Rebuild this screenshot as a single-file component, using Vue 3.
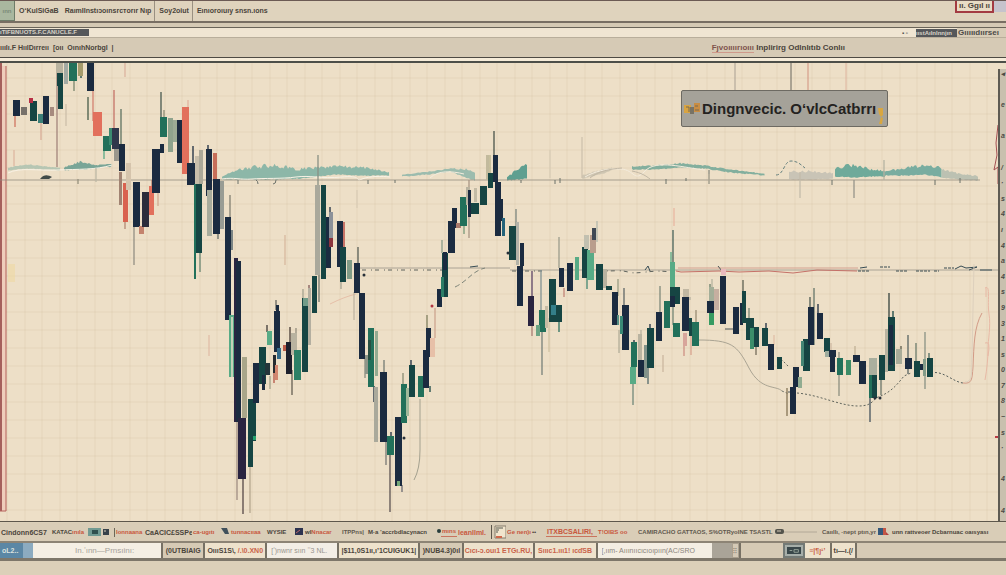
<script setup>
const N = '#1b2b40'
const T = '#164543'
const G = '#22705a'
const S = '#58ab86'
const M = '#b9b3a0'
const R = '#e2705c'
const P = '#2a2440'

// x, width, top, bottom, fill
const candles = [
  [13, 7, 100, 116, N], [21, 6, 107, 115, '#77716a'], [30, 7, 101, 121, T], [29, 4, 98, 103, '#b82f45'], [38, 5, 114, 123, '#3c7f78'],
  [43, 6, 96, 124, N], [50, 4, 107, 116, '#a68a7e'], [56, 7, 63, 73, M], [57, 6, 73, 86, T], [58, 5, 86, 109, T],
  [64, 4, 63, 84, '#a3aaa3'], [69, 8, 62, 81, G], [78, 5, 63, 76, '#a59b6c'], [87, 7, 62, 91, N], [93, 9, 112, 136, R],
  [103, 8, 136, 151, G], [109, 4, 128, 145, '#3c8a70'], [112, 7, 128, 149, '#30364b'], [114, 5, 149, 161, '#9a978d'], [119, 6, 144, 171, N],
  [119, 3, 172, 205, '#a18372'], [123, 5, 183, 222, '#d9624f'], [126, 5, 163, 190, '#d5c4ac'], [133, 7, 182, 227, N], [139, 5, 226, 234, '#c4836d'],
  [142, 7, 192, 227, '#2b2c3b'], [149, 5, 186, 215, R], [152, 8, 149, 193, N], [160, 7, 117, 137, G], [160, 4, 144, 153, N],
  [168, 5, 118, 152, '#8fa38d'], [173, 4, 120, 142, '#9cab95'], [177, 5, 120, 163, N], [182, 7, 107, 174, R], [187, 8, 163, 185, N],
  [195, 4, 156, 184, '#c8beaa'], [199, 4, 150, 184, '#aca898'], [195, 7, 184, 253, T], [194, 2, 184, 279, G], [206, 6, 149, 196, N],
  [213, 4, 153, 180, '#c66e59'], [207, 5, 190, 236, '#a8ac9c'], [213, 7, 179, 234, N], [220, 4, 181, 229, '#999c94'], [225, 6, 217, 320, N],
  [229, 5, 315, 377, S], [231, 2, 317, 377, '#c4d1b6'], [242, 5, 357, 418, '#a9a68a'], [234, 4, 258, 422, P], [236, 5, 261, 422, N],
  [238, 8, 418, 479, P], [248, 8, 399, 441, T], [248, 5, 440, 467, T], [253, 3, 436, 440, '#25a26e'], [253, 6, 363, 403, N],
  [259, 7, 347, 384, T], [262, 3, 375, 390, N], [265, 5, 363, 375, '#25353b'], [267, 5, 331, 345, S], [274, 6, 311, 352, N],
  [276, 3, 305, 312, N], [273, 3, 355, 373, '#272b30'], [275, 3, 365, 380, '#d4866f'], [277, 4, 348, 359, '#356b8a'], [283, 5, 345, 351, '#bb5b48'],
  [286, 6, 342, 374, '#1d202c'], [291, 6, 333, 355, M], [294, 7, 350, 380, '#2d8066'], [302, 6, 298, 372, T], [303, 5, 298, 306, '#719b88'],
  [308, 3, 288, 345, '#b4afa0'], [312, 5, 276, 313, T], [315, 5, 185, 275, '#aaa99c'], [321, 5, 185, 279, T], [326, 5, 217, 268, N],
  [329, 4, 212, 238, '#8c9199'], [329, 4, 238, 247, '#8b343d'], [337, 6, 221, 267, N], [343, 2, 222, 248, '#c67367'], [340, 6, 247, 282, T],
  [347, 5, 260, 279, '#809c87'], [354, 6, 263, 293, N], [359, 6, 293, 359, N], [365, 3, 355, 374, '#8e9588'], [368, 6, 328, 387, G],
  [368, 3, 340, 360, '#274f42'], [375, 3, 331, 376, '#94ab91'], [380, 7, 372, 442, N], [374, 4, 387, 442, '#aaa99b'], [387, 7, 436, 455, G],
  [395, 7, 417, 486, N], [397, 3, 481, 486, '#74a879'], [401, 6, 384, 423, G], [406, 3, 388, 416, '#a1b99c'], [409, 6, 365, 397, T],
  [418, 6, 376, 397, G], [423, 6, 350, 388, N], [426, 5, 328, 357, N], [437, 5, 289, 307, N], [430, 5, 338, 357, '#e7c0a8'],
  [442, 6, 253, 297, T], [443, 4, 252, 270, N], [441, 3, 277, 297, '#2b7d66'], [448, 7, 221, 253, N], [452, 5, 208, 228, N],
  [456, 5, 223, 228, '#ab7b6c'], [460, 7, 197, 226, G], [466, 4, 187, 205, M], [468, 3, 190, 217, N], [471, 8, 203, 214, T],
  [474, 3, 188, 202, '#c4bba5'], [480, 7, 186, 205, T], [486, 3, 155, 180, '#c2ba9d'], [488, 5, 173, 188, T], [493, 5, 155, 182, N],
  [495, 6, 182, 236, N], [499, 4, 199, 221, N], [502, 3, 218, 236, '#23637a'], [509, 7, 226, 260, T], [516, 3, 222, 265, '#b2b2a8'],
  [520, 4, 243, 266, N], [517, 6, 266, 306, N], [528, 6, 296, 326, P], [539, 7, 310, 332, G], [536, 4, 325, 336, '#6ba383'],
  [545, 3, 306, 328, '#c6bba4'], [549, 7, 279, 322, T], [556, 6, 305, 322, T], [551, 5, 305, 315, '#347f89'], [559, 5, 268, 287, N],
  [567, 6, 263, 291, N], [575, 4, 257, 280, S], [582, 6, 247, 278, T], [587, 7, 250, 280, S], [584, 5, 235, 249, '#c2c0b0'],
  [590, 6, 235, 253, '#b99d8c'], [592, 4, 228, 240, '#404955'], [596, 7, 264, 290, T], [603, 4, 269, 288, M], [606, 6, 286, 290, T],
  [612, 6, 292, 325, N], [617, 2, 315, 325, '#568e83'], [622, 7, 305, 350, N], [620, 3, 316, 334, '#3a8976'], [631, 6, 342, 367, G],
  [630, 6, 367, 384, S], [638, 6, 360, 377, N], [638, 4, 334, 360, M], [644, 3, 345, 378, '#82938a'], [647, 7, 328, 368, T],
  [656, 6, 312, 341, N], [664, 6, 301, 328, G], [670, 5, 262, 288, S], [670, 10, 287, 304, T], [670, 5, 296, 307, N],
  [673, 7, 323, 337, G], [683, 6, 289, 297, '#c1b7a2'], [682, 7, 297, 331, N], [683, 4, 333, 346, '#d8a59b'], [689, 3, 318, 336, T],
  [692, 7, 322, 346, G], [707, 7, 301, 313, N], [709, 5, 313, 325, '#369b62'], [709, 5, 287, 301, '#a3ae98'], [714, 5, 289, 310, '#c6afa0'],
  [720, 6, 276, 324, N], [721, 5, 269, 275, '#e8b9bd'], [733, 6, 307, 334, N], [740, 3, 303, 325, N], [742, 4, 291, 323, T],
  [746, 8, 318, 340, T], [750, 4, 328, 349, '#3b8e6a'], [754, 5, 327, 347, T], [762, 6, 328, 346, T], [768, 6, 344, 370, N],
  [777, 5, 357, 369, T], [793, 6, 367, 387, N], [798, 4, 377, 388, '#91ac91'], [790, 6, 387, 414, N], [803, 7, 339, 371, T],
  [801, 3, 341, 366, '#448574'], [808, 6, 307, 345, N], [817, 6, 313, 339, N], [824, 6, 338, 352, T], [825, 5, 351, 357, '#9dab9d'],
  [829, 7, 350, 357, N], [830, 5, 357, 372, N], [837, 6, 358, 375, G], [846, 5, 360, 375, '#3d8c67'], [853, 7, 355, 362, N],
  [859, 7, 361, 384, N], [869, 8, 358, 377, '#aaaf9e'], [869, 8, 375, 398, G], [872, 5, 375, 398, T], [879, 6, 355, 380, T],
  [885, 3, 329, 372, M], [888, 7, 317, 371, T], [889, 4, 325, 365, N], [896, 6, 349, 364, '#a9ac99'], [905, 7, 358, 369, N],
  [914, 6, 361, 377, T], [920, 4, 364, 370, N], [923, 3, 359, 376, '#859c89'], [927, 6, 358, 377, T],
]

// x, top, bottom, stroke
const wicks = [
  [15, 116, 127, '#cf7562'], [41, 120, 140, '#d9ad98'], [57, 63, 167, '#a3847c'], [66, 104, 126, '#cdbfaa'], [74, 80, 91, '#78846c'],
  [81, 62, 78, T], [88, 97, 120, '#475c4a'], [93, 91, 121, '#d38070'], [104, 150, 159, S], [114, 90, 130, '#c47267'],
  [121, 109, 146, '#5d7262'], [125, 63, 77, '#dbb3a0'], [134, 226, 265, '#938f84'], [125, 218, 229, '#b28875'], [152, 180, 203, '#b77b66'],
  [158, 190, 206, '#d1ab91'], [161, 92, 118, '#475850'], [164, 110, 120, '#8e8d75'], [188, 100, 110, '#e2b29f'], [193, 146, 164, N],
  [208, 145, 152, N], [200, 250, 272, '#6a8571'], [218, 228, 239, '#686f68'], [230, 195, 221, '#827f72'], [232, 230, 250, '#3d5360'],
  [237, 258, 500, '#9f8d82'], [243, 478, 514, '#554848'], [250, 466, 513, '#b5a78f'], [267, 325, 332, '#3e3937'], [276, 300, 310, '#666660'],
  [270, 376, 389, '#a2a18a'], [274, 365, 383, '#b45346'], [290, 327, 343, '#473b35'], [296, 328, 350, '#938d7d'], [292, 370, 395, '#645e52'],
  [303, 289, 300, '#a4a18e'], [309, 285, 306, '#81585a'], [318, 155, 188, '#899084'], [319, 270, 302, '#70766d'], [330, 207, 220, N],
  [285, 235, 265, '#d7b89f'], [209, 335, 356, '#e1bda8'], [358, 247, 264, '#585f57'], [354, 292, 320, '#bfb4a2'], [365, 359, 378, '#888d80'],
  [341, 278, 289, '#a7a493'], [357, 190, 208, '#dacdb6'], [384, 360, 373, '#737b74'], [374, 386, 402, N], [391, 432, 438, N],
  [386, 440, 465, '#777774'], [390, 455, 512, '#5b5252'], [403, 373, 384, '#878b73'], [402, 485, 492, '#696972'], [411, 360, 366, N],
  [427, 315, 329, '#818061'], [430, 386, 392, T], [435, 308, 338, '#cca58f'], [442, 240, 253, '#899b88'],
  [469, 180, 238, '#a99685'], [464, 222, 234, '#779979'], [494, 131, 155, '#49534b'], [490, 155, 174, '#b2ae88'], [516, 209, 226, '#7c867f'],
  [532, 271, 297, '#5f4669'], [532, 325, 336, '#aa7e75'], [541, 270, 310, '#819193'], [542, 331, 375, '#77807a'], [549, 318, 352, '#d1c3a4'],
  [559, 237, 268, '#9b9c8d'], [559, 322, 332, '#2c7060'], [564, 288, 297, '#c28478'], [587, 278, 289, '#438671'], [597, 221, 242, '#b3b8ad'],
  [618, 279, 296, '#9a9d84'], [624, 288, 306, '#5f6667'], [619, 330, 353, '#b2ae9a'], [634, 340, 344, N], [633, 383, 405, '#70877a'],
  [641, 330, 362, '#b7b09f'], [648, 367, 384, '#536a6c'], [650, 324, 330, N], [660, 286, 313, '#7f897b'], [663, 355, 372, '#cbb7a0'],
  [673, 230, 289, '#49635b'], [671, 252, 290, S], [673, 306, 325, '#738576'], [684, 336, 356, '#ce9084'], [691, 335, 355, '#d9a38f'],
  [696, 310, 323, '#998c73'], [690, 297, 300, '#b7b09f'], [710, 284, 301, '#677d68'], [712, 279, 290, '#b5b4a0'], [743, 280, 294, '#5e6153'],
  [749, 308, 320, '#758574'], [756, 347, 355, '#756c5b'], [766, 323, 329, N], [774, 335, 345, '#e0bfa8'], [787, 388, 416, '#847456'],
  [810, 297, 309, '#4e5a52'], [814, 288, 345, '#647569'], [818, 304, 315, N], [831, 343, 360, '#ceb8a2'], [839, 352, 396, '#8d8f80'],
  [855, 346, 356, '#c0b196'], [870, 397, 422, '#44525d'], [881, 377, 395, '#6b756a'], [889, 293, 323, '#35423e'], [893, 311, 320, T],
  [901, 346, 350, '#5c5b4d'], [908, 335, 374, '#586463'], [916, 343, 362, '#6c7c6c'], [925, 332, 389, '#899185'], [929, 353, 359, '#4d6961'],
  [14, 150, 166, '#ddb7a1'], [96, 168, 182, '#bdb9a6'], [78, 179, 184, '#97917d'], [884, 160, 180, '#b5b3a2'], [854, 180, 198, '#95948a'],
  [800, 172, 198, '#c3bcab'], [582, 137, 178, '#cec2ae'], [550, 150, 178, '#d9ccb6'], [674, 208, 226, '#e8b7a2'], [709, 174, 184, '#bcb29e'],
]

const callouts = [
  [735, '#a99f92'], [791, '#69665e'], [808, '#d1917f'], [846, '#dfb49f'],
]

const noise = (i) => {
  const v = Math.sin(i * 12.9898) * 43758.5453
  return v - Math.floor(v)
}

// Hazy indicator ribbons: control points of x, top, bottom
const ribbonSpecs = [
  { fill: '#b6c6b3', pts: [[8, 168, 170], [28, 165, 168], [45, 167, 169], [60, 168, 170]] },
  { fill: '#79a597', pts: [[64, 168, 170], [80, 163, 169], [95, 166, 168], [112, 164, 166]] },
  { fill: '#8db7a8', pts: [[222, 177, 179], [240, 171, 179], [270, 168, 179], [300, 171, 178], [335, 168, 174], [362, 169, 175], [390, 173, 175]] },
  { fill: '#9cbcae', pts: [[402, 175, 176], [430, 172, 174], [450, 169, 171], [466, 171, 177], [475, 175, 180]] },
  { fill: '#5f9f90', pts: [[507, 178, 180], [518, 171, 179], [528, 168, 178]] },
  { fill: '#cfc6b2', pts: [[582, 176, 178], [600, 171, 174], [612, 168, 170]] },
  { fill: '#83af9e', pts: [[632, 167, 169], [660, 166, 169], [680, 164, 167], [705, 166, 168], [730, 170, 172], [765, 174, 175]] },
  { fill: '#c9c4b6', pts: [[789, 173, 179], [812, 173, 179], [834, 174, 178]] },
  { fill: '#6faa9a', pts: [[835, 170, 176], [853, 167, 177], [870, 171, 176], [885, 172, 176]] },
  { fill: '#79ada0', pts: [[885, 172, 175], [910, 169, 175], [925, 167, 174], [942, 170, 177]] },
  { fill: '#bcc1b2', pts: [[942, 171, 177], [960, 175, 179], [978, 177, 180]] },
]
const ribbons = ribbonSpecs.map(({ fill, pts }) => {
  const top = []
  const low = []
  for (let k = 0; k < pts.length - 1; k++) {
    const [x0, a0, b0] = pts[k]
    const [x1, a1, b1] = pts[k + 1]
    for (let x = x0; x <= x1; x += 1.5) {
      const t = (x - x0) / (x1 - x0)
      const thick = (b0 - a0) * (1 - t) + (b1 - a1) * t
      top.push(`${x},${(a0 + (a1 - a0) * t - noise(x) * thick * 0.5).toFixed(1)}`)
      low.unshift(`${x},${(b0 + (b1 - b0) * t + noise(x + 9)).toFixed(1)}`)
    }
  }
  return { fill, points: [...top, ...low].join(' ') }
})

const columns = Array.from({ length: 57 }, (_, i) => 7 + Math.round(i * 17.5))
const rows = Array.from({ length: 25 }, (_, i) => 78 + i * 18)
const ticks = ['◂', '', 'e', '', 'a', '', '/', '·', 's', '4', 'ı', '4', 'a', '4', 's', '9', '3', '1', 's', '0', '7', '8', '~', 's', '·', '', '4', '', '4']

const status = [
  { t: 'Cindonn6CS7', c: 'big' }, { t: 'KATAC', c: '', r: 'ınıla' }, { i: 'screen' }, { t: 'Ionnaana', c: 'red mark' }, { t: 'CaACIC£SSPe', c: 'big' },
  { t: 'ca-ugıtı', c: 'red' }, { i: 'disk' }, { t: 'tunnacııaa', c: 'red' }, { t: 'WYSIE', c: '' }, { i: 'save' },
  { t: 'wl', c: '', r: 'Nnacar' }, { t: 'ITPPns|', c: 'grey' }, { t: 'M·a ’accrbdlacynacn', c: '' }, { i: 'dot' }, { t: 'mıns', c: 'red line' },
  { t: 'leanllml.', c: 'red big' }, { i: 'page' }, { t: 'Ge nen)ı', c: 'red' }, { t: '••', c: '' }, { t: 'ITXBCSALIRI,', c: 'red line big' },
  { t: 'T!OIBS oo', c: 'red' }, { t: 'CAMIRACHO GATTAOS, S%OTRyoINE TSASTL', c: 'grey' }, { i: 'slider' }, { t: 'Caııllı, ·nept ptın,yr', c: 'grey' }, { i: 'flag' },
  { t: 'unn rattveoer Dcbarnuac oaısyası', c: '' },
]
</script>

<template>
  <div class="page">
    <nav class="menu">
      <button class="tile" type="button">ınn</button>
      <button type="button">OʻKulSiGaB</button>
      <button class="ruled" type="button">RaımIInstıɔoınsrcтorır Nıp</button>
      <button class="ruled" type="button">Soy2oiut</button>
      <button class="small" type="button">Eınıoroıuıy snsn.ıons</button>
      <span class="grow"></span>
      <button class="alert" type="button">ıı. Ggıl ıı</button>
      <span class="corner"></span>
    </nav>
    <div class="seam"></div>
    <div class="address">
      <span class="crumb">ıTIFBNUOTS.F.CANUCLE.F</span>
      <span class="grow"></span>
      <span class="dots">▪ ▫</span>
      <span class="crumb wide">ııstAılnlnnjın</span><span class="tail">Gıııııdıırseı</span>
    </div>
    <div class="toolbar">
      <span>ııılı.F HıılDırreıı&nbsp; [oıı&nbsp; OınıhNorbgl&nbsp; |</span>
      <span class="centre"><em>Fȷvoıııırıoııı</em> Inplirirg Odlnlıtıb Conlıı</span>
    </div>
    <div class="gap"></div>

    <main class="stage">
      <div class="chart">
        <svg viewBox="0 63 998 458" role="img" aria-label="Candlestick chart">
          <g class="grid">
            <path v-for="x in columns" :key="'c' + x" :d="`M${x} 63V521`" />
            <path v-for="y in rows" :key="'r' + y" :d="`M0 ${y}H998`" />
          </g>
          <rect x="0" y="63" width="2" height="448" fill="#a5605c" />
          <rect x="2" y="66" width="4" height="445" fill="#efcdbb" />
          <path d="M6 66V511H0" fill="none" stroke="#b5615b" />
          <rect x="8" y="264" width="7" height="18" fill="#f0d79b" opacity=".5" />
          <path v-for="[x, c] in callouts" :key="x" :d="`M${x} 63V92`" :stroke="c" fill="none" />
          <polygon v-for="r in ribbons" :key="r.points" :points="r.points" :fill="r.fill" />
          <g fill="none">
            <path d="M0 180H980" stroke="#938d80" opacity=".8" />
            <path d="M40 179c4-5 8-4 12-2l-3 2z" fill="#414b49" />
            <path d="M222 179c12-2 18 1 30 0s30 0 44-2 24 2 46 0 12 5 20 2 20-3 28-2" stroke="#f8f2e5" />
            <path d="M8 173c12-6 30-2 50-3s38 0 54-5" stroke="#f8f2e5" />
            <path d="M430 178c8-8 22-7 34-4M585 177c8-5 22-9 36-8s13 14 24 2 40-3 60-1" stroke="#f4ecdd" />
            <path d="M238 180v4M256 180q2 1 2 4M276 180q0 4-3 4M368 180v4M395 180v3M521 180v3M555 180v4M560 178v5M666 179v5M686 178v3M709 170v14M832 180v5M935 180v5M960 178v5" stroke="#6b7069" />
            <path d="M776 175c8 0 8-14 15-14s10 4 14 7" stroke="#66817f" stroke-dasharray="3 2" />
            <path d="M590 178c8-7 20-9 32-10M632 171c10 2 14 5 18 8" stroke="#c1b7a5" />
            <path d="M360 268H510" stroke="#aaa294" /><path d="M510 270H998" stroke="#aaa395" />
            <path d="M362 270H448M512 271H545M598 269c10 4 20 0 30 3s24-3 42 0" stroke="#5e625c" stroke-dasharray="4 5 1 3" />
            <path d="M676 271l5 1 38-1 20 1 30-1 24 2 24-3 40 1" stroke="#c57168" />
            <path d="M678 268H858" stroke="#d3a191" />
            <path d="M858 271h12M880 267h10M896 271h12M916 271h14M934 271h5M944 268h10" stroke="#394a51" stroke-dasharray="3 1" />
            <path d="M955 269l6-3 5 2 11-1-8 3M980 270h12M860 268l7-1M470 267l8-1M645 270l3-4 2 5" stroke="#374c54" />
            <path d="M455 287c13-6 17-16 30-19" stroke="#7f8579" stroke-dasharray="5 3" />
            <path d="M330 304c10-5 18-8 26-10" stroke="#e6bfa8" />
            <path d="M414 480q6-11 6-30v-51" stroke="#a4a18f" />
            <path d="M698 340c34 0 39 5 51 28s27 17 33 23" stroke="#aaa493" />
            <path d="M782 391l7 3" stroke="#6e746b" stroke-dasharray="2 2" />
            <path d="M797 393c23 2 43 13 61 13 15 0 14-6 20-9 12-4 19-12 26-21l7-3" stroke="#61665d" stroke-dasharray="2 2" />
            <path d="M781 359l7 7" stroke="#61665d" stroke-dasharray="2 2" />
            <path d="M931 373c12-3 22 9 32 10" stroke="#535c59" stroke-dasharray="2 2" />
            <path d="M963 383c9 1 9-3 10-16 1-22 1-40 9-54" stroke="#d29a86" />
            <path d="M965 382c9 0 6-12 7-28l2-90" stroke="#ddd0bd" />
            <path d="M985 288c6-4 2 14 4 26s-1 26-1 35-1 20-3 31M985 343q6-3 3 13M986 288v9" stroke="#e8b9a5" />
            <path d="M718 266l4 5M725 329h8M788 392h7" stroke="#4c5556" />
          </g>
          <path v-for="(w, i) in wicks" :key="'w' + i" :d="`M${w[0]} ${w[1]}V${w[2]}`" :stroke="w[3]" stroke-width="1.3" />
          <rect v-for="(c, i) in candles" :key="'k' + i" :x="c[0]" :y="c[2]" :width="c[1]" :height="c[3] - c[2]" :fill="c[4]" />
          <g fill="#273039">
            <circle cx="432" cy="306" r="1.5" fill="#b23742" /><circle cx="404" cy="438" r="1.5" /><circle cx="364" cy="275" r="1.5" />
            <circle cx="875" cy="398" r="1.5" /><circle cx="880" cy="398" r="1.5" /><circle cx="508" cy="253" r="1.5" />
          </g>
          <path d="M998 125l-2 18 1 12-3 15 4-3v17" fill="none" stroke="#a44f51" />
          <path d="M995 437h3" stroke="#b93a45" stroke-width="2" />
        </svg>
        <div class="label">
          <svg class="badge" viewBox="0 0 18 14" aria-hidden="true">
            <rect x="1" y="3" width="7" height="8" fill="#d9a441" /><rect x="7" y="5" width="4" height="7" fill="#787365" />
            <rect x="11" y="1" width="6" height="9" fill="#c98d43" /><path d="M3 5h3v5M12 4h3M12 8h4" fill="none" stroke="#776b55" />
          </svg>
          <span>Dingnvecic. OʻvlcCatbrrı</span>
          <svg class="flame" viewBox="0 0 8 20" aria-hidden="true"><path d="M1 2h5v7l-2 2 2 1-1 6H2l2-7-2-3z" fill="#d9a741" /></svg>
        </div>
      </div>
      <aside class="axis"><span v-for="(t, i) in ticks" :key="i">{{ t }}</span></aside>
    </main>

    <div class="status">
      <span v-for="(s, i) in status" :key="i" :class="s.c">
        <svg v-if="s.i === 'screen'" viewBox="0 0 23 10"><rect width="13" height="8" y="1" fill="#719a92" /><rect x="4" y="3" width="6" height="4" fill="#30504e" /><path d="M15 2h6v6h-6z" fill="#38424a" /><path d="M16 4h2" stroke="#d8ceba" /></svg>
        <svg v-else-if="s.i === 'disk'" viewBox="0 0 23 10"><path d="M2 1h6l2 6H6z" fill="#40515c" /></svg>
        <svg v-else-if="s.i === 'save'" viewBox="0 0 23 10"><rect x="2" y="1" width="8" height="7" fill="#2c3350" /><path d="M3 6l4-3" stroke="#b8666a" /></svg>
        <svg v-else-if="s.i === 'dot'" viewBox="0 0 23 10"><circle cx="4" cy="4" r="2" fill="#273d3c" /></svg>
        <svg v-else-if="s.i === 'page'" class="tall" viewBox="0 0 16 14"><path d="M0 0v14" stroke="#5d574b" stroke-width="2" /><path d="M4 1h11v12H4z" fill="#f1e5cd" stroke="#857c6c" /><path d="M5 3h7M5 5h3M5 7h2" stroke="#55594f" /><path d="M5 12h6" stroke="#cf694c" stroke-width="2" /></svg>
        <svg v-else-if="s.i === 'slider'" viewBox="0 0 44 10"><rect x="1" y="2" width="9" height="5" rx="2" fill="#54544d" /><path d="M3 4h4" stroke="#d5cab7" /><path d="M10 5H43" stroke="#b2a897" /></svg>
        <svg v-else-if="s.i === 'flag'" viewBox="0 0 23 10"><rect x="1" y="1" width="5" height="7" fill="#34587b" /><rect x="6" y="1" width="3" height="7" fill="#c45645" /><path d="M9 5l3 3H9z" fill="#b24040" /></svg>
        <template v-else>{{ s.t }}<b v-if="s.r"> {{ s.r }}</b></template>
      </span>
    </div>

    <div class="tasks">
      <label class="search"><i>oL2..</i><input type="text" value="In.ʼınn—Prnsıinı:" aria-label="Search" /></label>
      <button type="button">(0UTBIAIG</button>
      <button class="lit" type="button">OıııS1S\,<b> /.\0.XN0</b></button>
      <input class="field" type="text" value="[ʼ)nwnr sıın ʼʼ3 NL." aria-label="Owner" />
      <button class="lit" type="button">|$11,0S1ıı,ıʼ1CUIGUK1|</button>
      <button type="button">)NUB4.3)0ıl</button>
      <button class="lit hot" type="button">Cıcı-ɔ.ouı1 ETGı.RU,</button>
      <button class="lit hot" type="button">Sıııc1.ııı1! ıcɗSB</button>
      <label class="combo"><input type="text" value="[,ıım- Aııınııcıcıoıpıın(AC/SRO" aria-label="Account" /><span></span><em>⁝⁝</em></label>
      <span></span>
      <button class="chip" type="button"><svg viewBox="0 0 16 8" aria-label="Device"><rect width="16" height="8" fill="#39474a" /><path d="M3 4h3M8 3h5v3H8z" stroke="#9ba99f" fill="none" /></svg></button>
      <button class="lit hot end" type="button">≡|¶ȷ¹ʼ</button>
      <button class="lit" type="button">tı—ı.(/</button>
      <span></span>
    </div>
    <footer></footer>
  </div>
</template>

<style>
body { background: #dcd0b9; }
</style>

<style scoped>
.page { min-height: 100vh; display: flex; flex-direction: column; overflow: hidden; font-family: "Liberation Sans", Arial, sans-serif; font-size: 8px; font-weight: 700; line-height: 10px; color: #4a443b; white-space: nowrap; }
button, input { font: inherit; color: inherit; margin: 0; padding: 0; border: 0; background: none; min-width: 0; border-radius: 0; }
button { overflow: hidden; cursor: pointer; }
b, em, i { font-style: normal; font-weight: inherit; }
.grow { flex: 1; }
.menu { display: flex; align-items: stretch; height: 20px; font-size: 7px; background: #dfd3bd; border-top: 1px solid #6c5a54; border-bottom: 2px solid #786e63; }
.menu button { padding: 0 4px; }
.menu .tile { width: 15px; padding: 0; font-size: 6px; color: #7c8c78; background: #a9b79f; border-right: 1px solid #6e7c69; border-bottom: 1px solid #6e7c69; }
.menu .ruled { padding: 0 3px 0 2px; border-right: 1px solid #9a9081; margin-right: 2px; }
.menu .small { font-size: 7px; padding-left: 2px; }
.menu .alert { align-self: flex-start; height: 12px; width: 39px; padding: 0; font-size: 8px; line-height: 8px; background: #e8dcc5; border: solid #a33b42; border-width: 0 2px 2px; }
.corner { width: 12px; height: 11px; background: #c6c3cc; }
.seam { height: 4px; background: #d5c9b4; border-bottom: 1px solid #6a6459; }
.address { display: flex; align-items: center; height: 9px; background: #f0e5d2; border-bottom: 1px solid #b9ae9b; color: #4c4b49; }
.crumb { width: 89px; height: 7px; line-height: 7px; font-size: 6px; overflow: hidden; background: #55575a; color: #d7d2c6; }
.crumb.wide { width: 41px; height: 8px; line-height: 8px; }
.tail { width: 48px; overflow: hidden; padding-left: 1px; line-height: 9px; background: #d8ccb7; }
.dots { font-size: 6px; margin-right: 8px; }
.toolbar { display: flex; align-items: center; height: 19px; font-size: 7px; background: #d6cab5; border-bottom: 1px solid #4e4a43; }
.toolbar .centre { margin-left: auto; margin-right: 16%; font-size: 8px; }
.centre em { color: #80544d; border-bottom: 1px solid #cf998a; }
.gap { height: 3px; background: #f6ecd9; border-bottom: 2px solid #4d4f49; }
.stage { display: flex; background: #eddfc7; border-bottom: 1px solid #5d574c; }
.chart { flex: 1; min-width: 0; position: relative; }
.chart > svg { display: block; width: 100%; height: auto; }
.grid path { stroke: #c7b390; opacity: .2; }
.label { position: absolute; top: 27px; right: 11%; display: flex; align-items: center; gap: 1px; height: 35px; padding: 0 2px 0 1px; background: #a5a299; border: 1px solid #6d6a62; border-radius: 2px; color: #24221f; font-size: 15px; line-height: 20px; }
.badge { width: 18px; height: 14px; }
.flame { width: 8px; height: 20px; align-self: flex-end; }
.axis { width: 8px; box-sizing: border-box; margin-top: 6px; overflow: hidden; display: flex; flex-direction: column; background: #c9c0ae; border-left: 2px solid #5e5b53; color: #4c4a44; font-size: 7px; }
.axis span { flex: 1 1 0; min-height: 0; font-style: italic; padding-left: 1px; }
.status { display: grid; align-items: center; height: 18px; margin-top: 1px; background: #d9cdb7; font-size: 6px;
  grid-template-columns: 51fr 36fr 27fr 30fr 48fr 26fr 12fr 36fr 26fr 12fr 37fr 26fr 67fr 7fr 16fr 33fr 16fr 25fr 15fr 51fr 40fr 136fr 48fr 55fr 15fr 115fr; }
.status span { min-width: 0; overflow: hidden; padding-left: 1px; line-height: 9px; }
.status span svg { display: block; height: 10px; width: auto; }
.status span .tall { height: 14px; }
.status b, .status .red { color: #c8573e; }
.status .big { font-size: 7px; }
.status .grey { color: #5f584d; }
.status .line { border-bottom: 1px solid #c9745e; }
.status .mark { border-left: 1px solid #6c6658; }
.tasks { display: grid; align-items: stretch; height: 15px; border-top: 2px solid #8d8475; border-bottom: 3px solid #7e776a; background: #d6cab5; font-size: 7px;
  grid-template-columns: 163fr 42fr 62fr 72fr 81fr 44fr 70fr 63fr 143fr 42fr 22fr 27fr 25fr 149fr; }
.tasks > * { min-width: 0; overflow: hidden; border-right: 2px solid #777165; }
.tasks > span { border: 0; }
.tasks .lit { background: #eee2cc; }
.tasks b, .tasks .hot { color: #c9634a; }
.search { display: flex; background: #f5efe4; }
.search i { width: 33px; padding-left: 2px; line-height: 15px; background: #5b87a5; color: #dce2df; border-right: 10px solid #8cabc0; box-sizing: border-box; }
.search input { flex: 1; padding-left: 42px; color: #a5a19a; font-weight: 400; font-size: 8px; }
.field { background: #f3eee6; color: #98958f; padding-left: 4px; font-weight: 400; }
.combo { display: flex; background: #d4c9b6; }
.combo input { width: 110px; padding-left: 4px; background: #f4eee3; color: #8b857c; font-weight: 400; }
.combo span { width: 20px; background: #aaa498; }
.combo em { flex: 1; text-align: center; line-height: 14px; color: #877f72; border: 1px solid #aaa08f; }
.chip { background: #a6aea9; border: 2px solid #737a76; }
.chip svg { display: block; width: 14px; height: 7px; margin: auto; }
footer { flex: 1; min-height: 12px; background: #dcd0b9; }
</style>
